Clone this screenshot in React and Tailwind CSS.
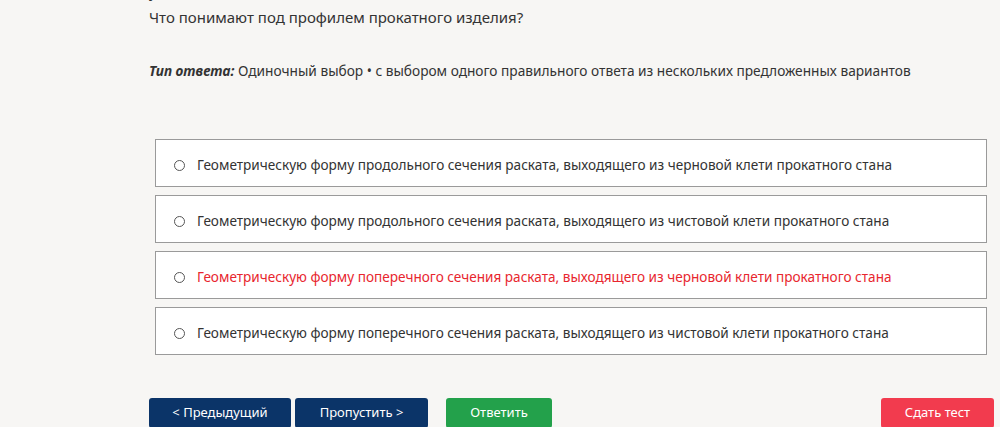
const options = [
  { text: "Геометрическую форму продольного сечения раската, выходящего из черновой клети прокатного стана" },
  { text: "Геометрическую форму продольного сечения раската, выходящего из чистовой клети прокатного стана" },
  { text: "Геометрическую форму поперечного сечения раската, выходящего из черновой клети прокатного стана", red: true },
  { text: "Геометрическую форму поперечного сечения раската, выходящего из чистовой клети прокатного стана" },
];

function Option({ text, red }) {
  return (
    <label className="flex items-center h-[48px] bg-white border border-[#9a9a9a] pl-[18px] pt-[4px] cursor-pointer">
      <span className="w-[11px] h-[11px] rounded-full border border-[#555] bg-white shrink-0" />
      <span className={"ml-[12px] text-[13.6px] " + (red ? "text-[#e8262e]" : "text-[#333]")}>{text}</span>
    </label>
  );
}

export default function App() {
  return (
    <div
      className="w-[1000px] h-[427px] overflow-hidden bg-[#f7f6f4] pl-[149px] pr-[13px]"
      style={{ fontFamily: '"Noto Sans", "Open Sans", sans-serif' }}
    >
      <div className="-mt-[19px] text-[15px] leading-[20px] text-[#333]">у</div>
      <div className="text-[15px] leading-[20px] text-[#333] mt-[6px]">Что понимают под профилем прокатного изделия?</div>

      <div className="mt-[34px] text-[13.7px] text-[#333] leading-[20px]">
        <span className="font-bold italic">Тип ответа:</span> Одиночный выбор • с выбором одного правильного ответа из нескольких предложенных вариантов
      </div>

      <div className="mt-[58px] ml-[6px] flex flex-col gap-[8px]">
        {options.map((o, i) => (
          <Option key={i} text={o.text} red={o.red} />
        ))}
      </div>

      <div className="mt-[43px] -mr-[7px] flex items-start">
        <button className="w-[142px] h-[30px] rounded-[3px] bg-[#0b3468] text-white text-[13px]">&lt; Предыдущий</button>
        <button className="ml-[4px] w-[133px] h-[30px] rounded-[3px] bg-[#0b3468] text-white text-[13px]">Пропустить &gt;</button>
        <button className="ml-[18px] w-[106px] h-[30px] rounded-[3px] bg-[#23a14b] text-white text-[13px]">Ответить</button>
        <button className="ml-auto w-[113px] h-[30px] rounded-[3px] bg-[#f23b4e] text-white text-[13px]">Сдать тест</button>
      </div>
    </div>
  );
}
